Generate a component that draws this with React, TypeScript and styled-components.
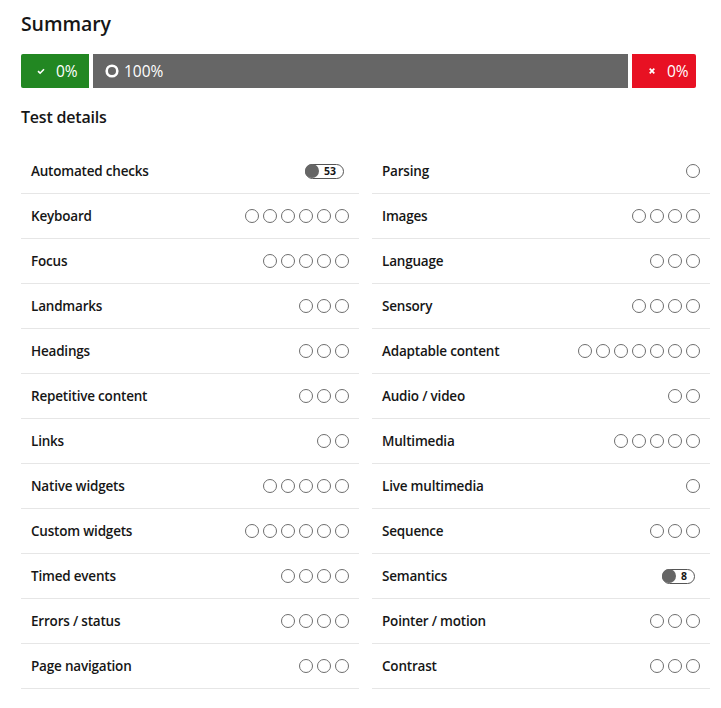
import styled, { createGlobalStyle } from 'styled-components';

const GlobalStyle = createGlobalStyle`
	body {
		margin: 0;
		background: #ffffff;
		font-family: 'Open Sans', 'Noto Sans', sans-serif;
		color: #161616;
	}
`;

type TestRow = { name: string; count?: number; steps?: number };

const leftTests: TestRow[] = [
	{ name: 'Automated checks', count: 53 },
	{ name: 'Keyboard', steps: 6 },
	{ name: 'Focus', steps: 5 },
	{ name: 'Landmarks', steps: 3 },
	{ name: 'Headings', steps: 3 },
	{ name: 'Repetitive content', steps: 3 },
	{ name: 'Links', steps: 2 },
	{ name: 'Native widgets', steps: 5 },
	{ name: 'Custom widgets', steps: 6 },
	{ name: 'Timed events', steps: 4 },
	{ name: 'Errors / status', steps: 4 },
	{ name: 'Page navigation', steps: 3 },
];

const rightTests: TestRow[] = [
	{ name: 'Parsing', steps: 1 },
	{ name: 'Images', steps: 4 },
	{ name: 'Language', steps: 3 },
	{ name: 'Sensory', steps: 4 },
	{ name: 'Adaptable content', steps: 7 },
	{ name: 'Audio / video', steps: 2 },
	{ name: 'Multimedia', steps: 5 },
	{ name: 'Live multimedia', steps: 1 },
	{ name: 'Sequence', steps: 3 },
	{ name: 'Semantics', count: 8 },
	{ name: 'Pointer / motion', steps: 3 },
	{ name: 'Contrast', steps: 3 },
];

function Column({ tests }: { tests: TestRow[] }) {
	return (
		<List>
			{tests.map((t) => (
				<Row key={t.name}>
					<Label>{t.name}</Label>
					{t.count !== undefined ? (
						<Pill>
							<PillDot />
							<PillCount>{t.count}</PillCount>
						</Pill>
					) : (
						<Steps>
							{Array.from({ length: t.steps || 0 }).map((_, i) => (
								<Step key={i} />
							))}
						</Steps>
					)}
				</Row>
			))}
		</List>
	);
}

function App() {
	return (
		<Page>
			<GlobalStyle />
			<Title>Summary</Title>
			<SummaryBar>
				<Segment $bg="#228722" $width={68} $round="left">
					<svg width="10" height="10" viewBox="0 0 10 10">
						<path d="M2 5.2 L4.1 7.2 L8 3.2" fill="none" stroke="#fff" strokeWidth="1.6" />
					</svg>
					<span>0%</span>
				</Segment>
				<Segment $bg="#666666" $grow>
					<svg width="14" height="14" viewBox="0 0 14 14">
						<circle cx="7" cy="7" r="5.3" fill="none" stroke="#fff" strokeWidth="2.6" />
					</svg>
					<span>100%</span>
				</Segment>
				<Segment $bg="#e81123" $width={64} $round="right">
					<svg width="10" height="10" viewBox="0 0 10 10">
						<path d="M2.7 2.7 L7.3 7.3 M7.3 2.7 L2.7 7.3" fill="none" stroke="#fff" strokeWidth="1.7" />
					</svg>
					<span>0%</span>
				</Segment>
			</SummaryBar>
			<SubTitle>Test details</SubTitle>
			<Grid>
				<Column tests={leftTests} />
				<Column tests={rightTests} />
			</Grid>
		</Page>
	);
}

const Page = styled.main`
	padding: 10px 11px 20px 21px;
`;

const Title = styled.h1`
	margin: 0;
	font-size: 19.5px;
	font-weight: 600;
	line-height: 28px;
	letter-spacing: -0.1px;
	color: #161616;
`;

const SummaryBar = styled.div`
	display: flex;
	gap: 4px;
	width: 675px;
	height: 34px;
	margin-top: 16px;
`;

const Segment = styled.div<{ $bg: string; $width?: number; $grow?: boolean; $round?: 'left' | 'right' }>`
	display: flex;
	align-items: center;
	gap: ${({ $grow }) => ($grow ? '5px' : '10px')};
	padding-left: ${({ $grow }) => ($grow ? '12px' : '15px')};
	flex: ${({ $grow }) => ($grow ? '1' : 'none')};
	width: ${({ $width }) => ($width ? `${$width}px` : 'auto')};
	background: ${({ $bg }) => $bg};
	color: #fff;
	font-size: 15.5px;
	border-radius: ${({ $round }) => ($round === 'left' ? '2px 0 0 2px' : $round === 'right' ? '0 2px 2px 0' : '0')};
	box-sizing: border-box;
`;

const SubTitle = styled.h2`
	margin: 17px 0 0;
	font-size: 16px;
	font-weight: 600;
	line-height: 24px;
	letter-spacing: -0.2px;
	color: #161616;
`;

const Grid = styled.div`
	display: grid;
	grid-template-columns: 338px 338px;
	column-gap: 13px;
	margin-top: 20px;
`;

const List = styled.div`
	display: flex;
	flex-direction: column;
`;

const Row = styled.div`
	display: flex;
	align-items: center;
	justify-content: space-between;
	height: 45px;
	padding: 0 10px;
	border-bottom: 1px solid #e6e6e6;
	box-sizing: border-box;
`;

const Label = styled.span`
	font-size: 13.5px;
	font-weight: 600;
	letter-spacing: -0.2px;
	color: #161616;
`;

const Steps = styled.div`
	display: flex;
	gap: 4px;
`;

const Step = styled.span`
	width: 14px;
	height: 14px;
	border: 1px solid #6e6e6e;
	border-radius: 50%;
	box-sizing: border-box;
`;

const Pill = styled.div`
	display: flex;
	align-items: center;
	height: 15px;
	padding-right: 7px;
	margin-right: 5px;
	border: 1px solid #555;
	border-radius: 8px;
	box-sizing: border-box;
`;

const PillDot = styled.span`
	width: 14px;
	height: 14px;
	margin: -1px 0 0 -1px;
	align-self: flex-start;
	border-radius: 50%;
	background: #666666;
`;

const PillCount = styled.span`
	margin-left: 5px;
	font-size: 10.5px;
	font-weight: 700;
	line-height: 12px;
	color: #161616;
`;

export default App;
